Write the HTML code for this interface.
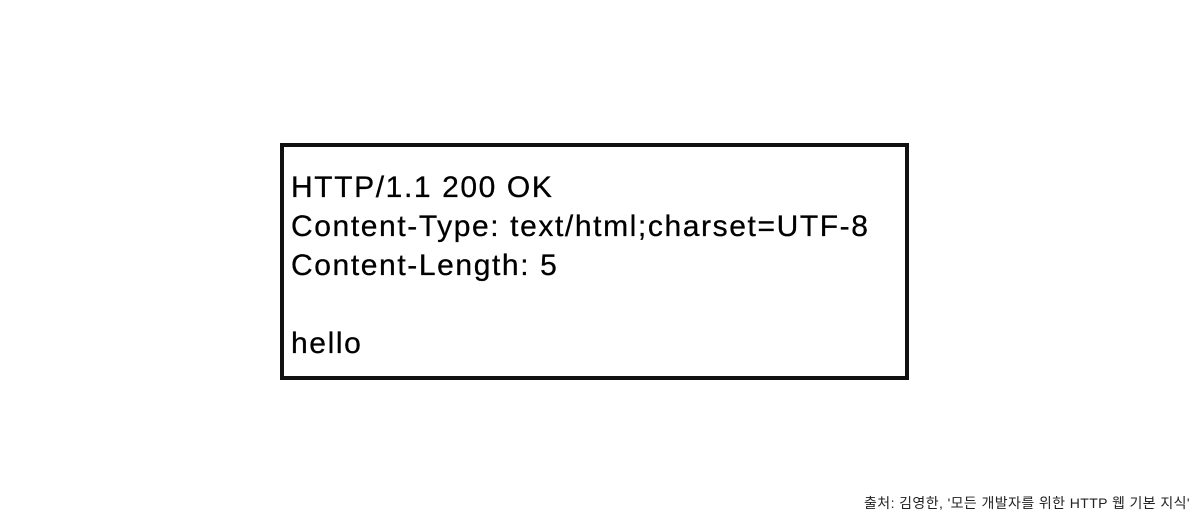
<!DOCTYPE html>
<html><head><meta charset="utf-8"><style>
body{margin:0;width:1200px;height:520px;background:#fff;position:relative;overflow:hidden;font-family:"Liberation Sans",Arial,sans-serif}
.box{position:absolute;left:280px;top:143px;width:621px;height:229px;border:4px solid #111;}
.t{position:absolute;left:291px;top:168px;font-size:30px;line-height:39px;color:#000;letter-spacing:1.6px;white-space:pre;-webkit-text-stroke:0.3px #000}
.f{position:absolute;right:10px;top:493px;font-size:14px;letter-spacing:0.4px;color:#222;font-family:"Liberation Sans","Noto Sans CJK KR",sans-serif}
</style></head><body>
<div class="box"></div>
<div class="t">HTTP/1.1 200 OK
Content-Type: text/html;charset=UTF-8
Content-Length: 5

hello</div>
<div class="f">출처: 김영한, '모든 개발자를 위한 HTTP 웹 기본 지식'</div>
</body></html>
